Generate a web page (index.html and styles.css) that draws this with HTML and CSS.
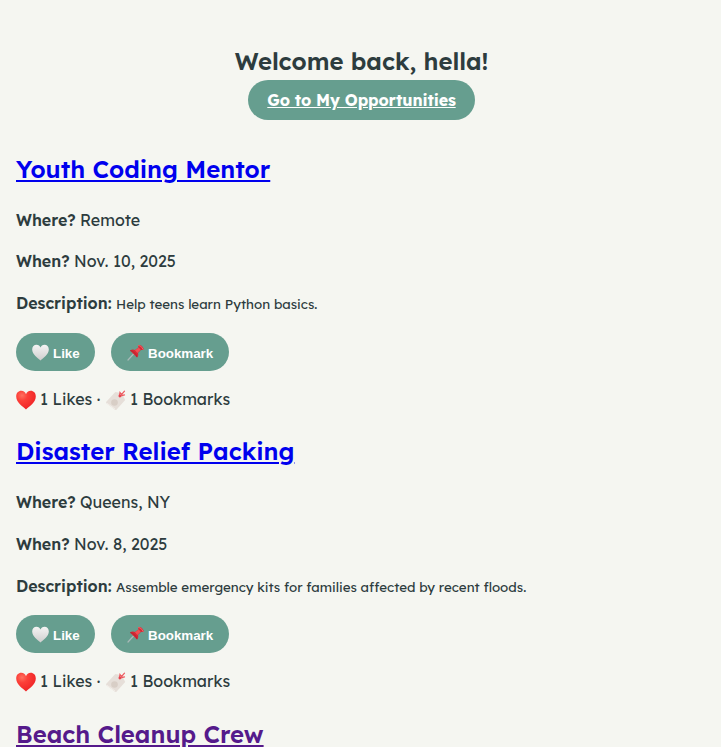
FILE: index.html
```html
<!DOCTYPE html>
<html lang="en">
<head>
<meta charset="utf-8">
<title>Opportunities</title>
<link rel="stylesheet" href="styles.css">
</head>
<body>
<svg class="defs" width="0" height="0" aria-hidden="true">
  <defs>
    <linearGradient id="white-fill" x1="0" y1="0" x2="0" y2="1"><stop offset="0" stop-color="#f5f4f4"/><stop offset="1" stop-color="#cfcece"/></linearGradient>
    <radialGradient id="red-fill" cx=".3" cy=".25" r=".8"><stop offset="0" stop-color="#ff7060"/><stop offset=".35" stop-color="#fc4039"/><stop offset="1" stop-color="#ee2225"/></radialGradient>
    <symbol id="heart" viewBox="0 0 20 20"><path d="M10 19.500C7 16.500 .2 12.500 .2 6.500C.2 3 2.400 .8 5.300 .8C7.600 .8 9.300 2.200 10 4.200C10.700 2.200 12.400 .8 14.700 .8C17.600 .8 19.800 3 19.800 6.500C19.800 12.500 13 16.500 10 19.500Z"/></symbol>
    <symbol id="pin" viewBox="0 0 17 17"><path d="M6.500 10L1 16" stroke="#a9b9b8" stroke-width="1.200" stroke-linecap="round"/><path d="M3 6.500Q5.500 4.800 8 6L11.500 3.500L11 1.200Q13.500 .5 15.300 2.500T16.500 5.800L13.900 6.100L10.900 9.100Q12 11.500 10 13.500Z" fill="#d92835"/><path d="M8 6.200L11.800 3.500L13.700 5.800L10.400 9Z" fill="#f05055"/><path d="M11.200 1.300Q14.500 1.400 16.300 5.700" fill="none" stroke="#f16566"/><path d="M3.200 6.600Q8.200 7.400 10 13.100" fill="none" stroke="#aa2630" stroke-width=".8"/></symbol>
    <symbol id="tag" viewBox="0 0 20 20"><path d="M.3 11.800L9.300 2L15.900 3.200L19.200 9.900L10.200 20Q9.400 20.300 8.600 19.600L.6 13.600Q-.2 12.600 .3 11.800Z" fill="#e6dfd9"/><path d="M1 13.300L9.200 19.200" stroke="#f3eee9"/><circle cx="8.500" cy="12.500" r="3.300" fill="#d8cec6"/><path d="M13.500 6.200L14 2.500L15.600 4.500L18.500 1.200M13.800 6.200L18.500 4.800" fill="none" stroke="#ee5a60" stroke-width="1.200" stroke-linecap="round"/><circle cx="13.900" cy="6" r="1.400" fill="#e64550"/></symbol>
  </defs>
</svg>
<header class="hero">
  <h1>Welcome back, hella!</h1>
  <a class="cta" href="#mine">Go to My Opportunities</a>
</header>
<main>
  <article>
    <h2><a href="#youth">Youth Coding Mentor</a></h2>
    <p class="place"><strong class="where">Where?</strong><span>Remote</span></p>
    <p class="time"><strong class="when">When?</strong><span>Nov. 10, 2025</span></p>
    <p class="about"><strong class="label">Description:</strong><small>Help teens learn Python basics.</small></p>
    <div class="actions">
      <button class="like"><svg><use href="#heart" fill="url(#white-fill)"/></svg>Like</button>
      <button class="bookmark"><svg><use href="#pin"/></svg>Bookmark</button>
    </div>
    <p class="counts"><svg><use href="#heart" fill="url(#red-fill)"/></svg><span class="likes">1 Likes ·</span><svg><use href="#tag"/></svg><span class="marks">1 Bookmarks</span></p>
  </article>
  <article>
    <h2><a href="#disaster">Disaster Relief Packing</a></h2>
    <p class="place"><strong class="where">Where?</strong><span>Queens, NY</span></p>
    <p class="time"><strong class="when">When?</strong><span>Nov. 8, 2025</span></p>
    <p class="about"><strong class="label">Description:</strong><small>Assemble emergency kits for families affected by recent floods.</small></p>
    <div class="actions">
      <button class="like"><svg><use href="#heart" fill="url(#white-fill)"/></svg>Like</button>
      <button class="bookmark"><svg><use href="#pin"/></svg>Bookmark</button>
    </div>
    <p class="counts"><svg><use href="#heart" fill="url(#red-fill)"/></svg><span class="likes">1 Likes ·</span><svg><use href="#tag"/></svg><span class="marks">1 Bookmarks</span></p>
  </article>
  <article class="last">
    <h2><a class="visited" href="#beach">Beach Cleanup Crew</a></h2>
  </article>
</main>
</body>
</html>
```
FILE: styles.css
```css
* { box-sizing: border-box; }
body { margin: 0; padding: 42px 16px 0; background: #f5f6f1; color: #2d3c3e; font: 16px/25.6px Lexend, Inter, sans-serif; white-space: nowrap; }
.defs { position: absolute; }
.hero { display: flex; flex-direction: column; align-items: center; margin-left: 1px; }
h1, h2 { margin: 0; font-size: 24px; line-height: 38.4px; font-weight: 600; }
h1 { height: 38px; letter-spacing: -.03px; padding-left: 1px; }
.cta { display: flex; align-items: center; justify-content: center; width: 227px; height: 40px; padding: 1px 0 0 1px; border-radius: 20px; background: #669e8f; color: #fff; font-weight: 700; letter-spacing: -.13px; }
main { padding-top: 30px; }
article { height: 282.4px; }
.last { height: 33px; }
h2 { margin-bottom: 19.5px; }
.last h2 { margin: 0; height: 33px; }
h2 a { color: #00e; text-decoration-thickness: 2px; text-underline-offset: 2px; }
h2 .visited { color: #551a8b; }
p { display: flex; align-items: baseline; margin: 0 0 16px; height: 25.6px; }
.time { margin-bottom: 16.5px; }
.about { margin-bottom: 0; }
article:first-child .place { margin-bottom: 15.4px; }
article:first-child .time { margin-bottom: 16.6px; }
strong { flex: none; font-weight: 600; }
.where { width: 64px; }
.when { width: 58px; }
.label { width: 100px; }
small { font-size: 13.333px; }
.actions { display: flex; gap: 16px; margin: 15.9px 0 16px; }
article:first-child .actions { margin-top: 16.4px; }
button { display: flex; align-items: center; height: 38px; padding: 2px 0 0 16px; border: 0; border-radius: 19px; background: #669e8f; color: #fff; font: bold 13.333px "Liberation Sans", sans-serif; }
button svg { width: 17px; height: 17px; margin: -1px 4px 0 0; }
.like { width: 79px; }
.bookmark { width: 118px; }
.counts { align-items: center; }
.counts svg { width: 20px; height: 20px; flex: none; }
.likes { width: 66px; margin-left: 4px; }
.marks { margin-left: 4px; }
```
